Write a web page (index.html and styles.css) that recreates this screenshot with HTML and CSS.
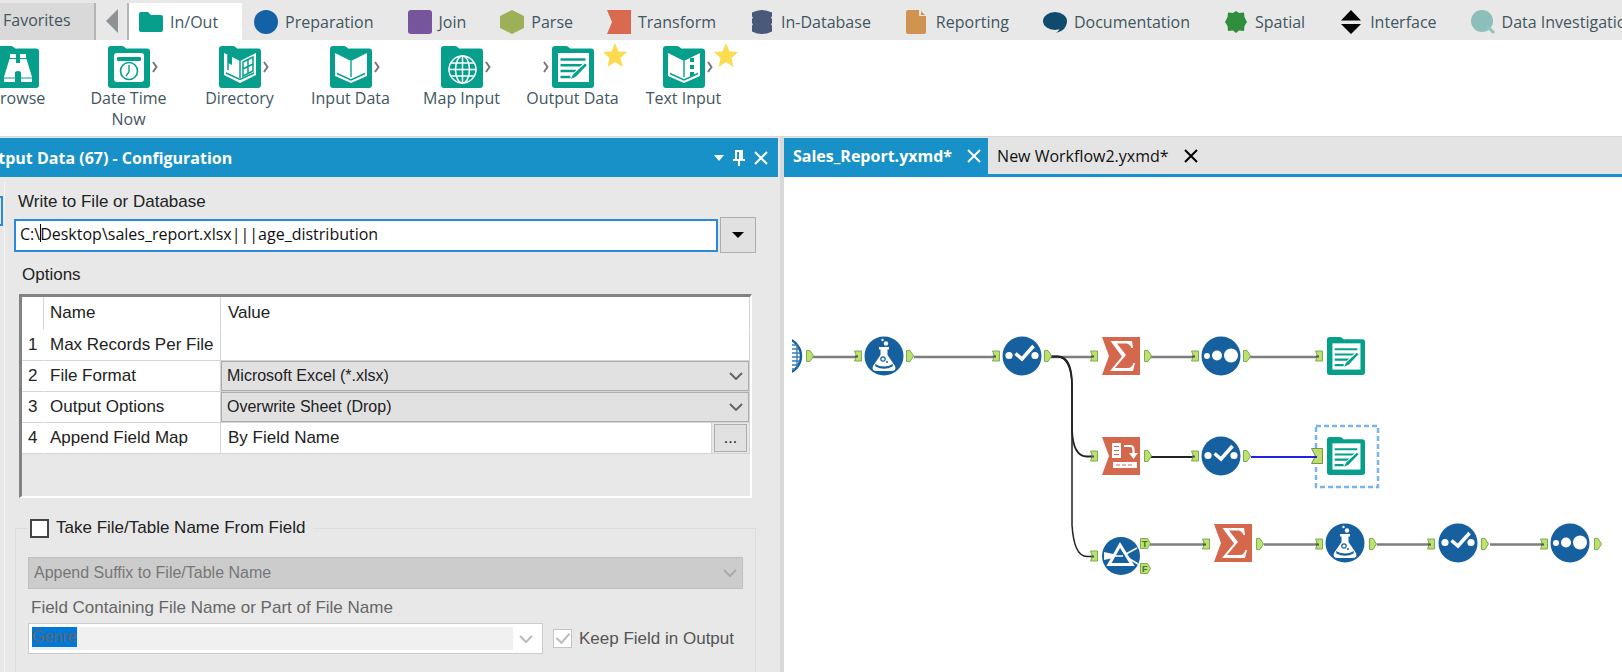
FILE: index.html
```html
<!DOCTYPE html>
<html lang="en">
<head>
<meta charset="utf-8">
<title>Sales_Report.yxmd</title>
<link rel="stylesheet" href="styles.css">
</head>
<body>
<svg class="symbols" aria-hidden="true">
  <symbol id="folder" viewBox="0 0 42 42">
    <path fill="#059f8c" d="M0 3a3 3 0 0 1 3-3h11q2 0 3 1.500t3 1h19a3 3 0 0 1 3 3v33.500a3 3 0 0 1-3 3H3a3 3 0 0 1-3-3z"/>
  </symbol>
  <symbol id="output" viewBox="0 0 42 42">
    <use href="#folder"/>
    <path fill="#fff" d="M6 7h31v29H6z"/>
    <path fill="none" stroke="#059f8c" stroke-width="2.400" d="M8.500 13.500h25M8.500 19.300h22M8.500 25h16M8.500 31h10"/>
    <path fill="none" stroke="#fff" stroke-width="5" d="M34 18 20 32"/>
    <path fill="#059f8c" d="m33 17.500 1.800 1.700-11 11.500-4.800 2.300 2-4.500z"/>
  </symbol>
  <symbol id="flask" viewBox="0 0 40 40">
    <circle cx="20" cy="20" r="19.500" fill="#17609f"/>
    <path fill="#fff" d="M15 11h10v2.500h-1.500V19L31 30q2 5-4 5H13q-6 0-4-5l7.500-11v-5.500H15z"/>
    <path fill="#17609f" d="M11 28q9 5 18 0l-.5 2.500q-8.500 4.500-17 0z"/>
    <circle cx="19" cy="23" r="2.200" fill="none" stroke="#17609f" stroke-width="1.200"/>
    <circle cx="23" cy="26" r="1" fill="#17609f"/>
    <circle cx="22" cy="7.500" r="2.200" fill="#fff"/><circle cx="18.500" cy="4" r="1.200" fill="#fff"/>
  </symbol>
  <symbol id="select" viewBox="0 0 40 40">
    <circle cx="20" cy="20" r="19.500" fill="#17609f"/>
    <circle cx="7" cy="19.500" r="3.600" fill="#fff"/><circle cx="33" cy="19.500" r="3.600" fill="#fff"/>
    <path fill="none" stroke="#fff" stroke-width="3.600" d="m13.500 17.500 6.500 5.500 11.500-13"/>
  </symbol>
  <symbol id="sort" viewBox="0 0 40 40">
    <circle cx="20" cy="20" r="19.500" fill="#17609f"/>
    <circle cx="6" cy="20" r="3" fill="#fff"/><circle cx="16" cy="19.500" r="5" fill="#fff"/><circle cx="30" cy="19.500" r="7" fill="#fff"/>
  </symbol>
  <symbol id="banner" viewBox="0 0 38 38"><path fill="#d5674d" d="M0 0h38v38H0l7-19z"/></symbol>
  <symbol id="sum" viewBox="0 0 38 38">
    <use href="#banner"/>
    <path fill="#fff" d="M8.500 4H30l1 7h-1.500q-1.500-4-5-4.500H15l9 11.500-11 13h13q4 0 5.500-5H33l-2 8H8l12-14.500z"/>
  </symbol>
  <symbol id="in" viewBox="0 0 8 12"><path fill="#bfe06c" stroke="#76ad55" d="M.5 1h7v10h-7l2-5z"/><path stroke="#555" stroke-width="2" d="M1 6.500h3"/></symbol>
  <symbol id="out" viewBox="0 0 8 12"><path fill="#bfe06c" stroke="#76ad55" d="M.5.5h3.500L7.500 6 4 11.500H.5z"/></symbol>
</svg>

<header class="ribbon">
  <nav class="tabs" aria-label="Tool categories">
    <button class="favorites">Favorites</button>
    <button class="scroll" aria-label="Scroll left"><svg width="12" height="24"><path fill="#8c9296" d="M12 0v24L0 12z"/></svg></button>
    <button class="tab current"><svg width="24" height="24" viewBox="0 0 24 24"><path fill="#059f8c" d="M0 4q0-2 2-2h7l3 3h10q2 0 2 2v13q0 2-2 2H2q-2 0-2-2z"/></svg>In/Out</button>
    <button class="tab"><svg width="24" height="24"><circle cx="12" cy="12" r="12" fill="#1362a6"/></svg>Preparation</button>
    <button class="tab"><svg width="24" height="24"><rect width="24" height="24" rx="3" fill="#77559c"/></svg>Join</button>
    <button class="tab"><svg width="24" height="24"><path fill="#9cb157" d="m12 0 12 6v12l-12 6-12-6V6z"/></svg>Parse</button>
    <button class="tab"><svg width="24" height="24"><path fill="#d9694f" d="M0 0h24v24H0l5-12z"/></svg>Transform</button>
    <button class="tab"><svg width="24" height="24"><path fill="#4a597a" d="M2 2.500Q12-2.500 22 2.500v4l-1 1 1 1.500v4l-1 1.500 1 1v6q-10 5-20 0v-6l1-1-1-1.500V9l1-1.500-1-1z"/></svg>In-Database</button>
    <button class="tab"><svg width="24" height="24"><path fill="#d19350" d="M1 2q0-2 2-2h11v6h7v16q0 2-2 2H3q-2 0-2-2z"/><path fill="#d19350" d="m16 1 4 4h-4z"/></svg>Reporting</button>
    <button class="tab"><svg width="24" height="24"><ellipse cx="12" cy="11" rx="12" ry="9" fill="#104a6c"/><path fill="#104a6c" d="M23.500 11q1 9-10.500 12 4-3 4-6z"/></svg>Documentation</button>
    <button class="tab"><svg width="24" height="24"><path fill="#2f8f3c" d="m12 1 3 2 5-.5.5 4.500 2.500 5-2.500 4-.5 5-5-.5-3 2.500-3-2.500-5 .5-.5-5L1 12l2.500-5L4 2.500 9 3z"/></svg>Spatial</button>
    <button class="tab"><svg width="24" height="24"><path d="m12 0 10 10.500H2zM2 14h20L12 24z"/></svg>Interface</button>
    <button class="tab"><svg width="24" height="24"><circle cx="11" cy="11" r="11" fill="#8cbfbc"/><path stroke="#8cc5c1" stroke-width="3" d="m16 16 7 7"/></svg>Data Investigation</button>
  </nav>
  <ul class="tools">
    <li><span class="glyph"><svg width="42" height="42"><use href="#folder"/><path fill="#fff" d="M13 8h6v4h-6zm10 0h6v4h-6zM12.500 13H19v4h4v-4h6.500l5.500 18v5H24V26q-3-2-6 0v10H7v-5z"/><path stroke="#059f8c" d="M7 32h11m6 0h11"/></svg></span>Browse</li>
    <li><span class="glyph"><svg width="42" height="42"><use href="#folder"/><rect x="6" y="7" width="30" height="29" rx="3" fill="#fff"/><rect x="9" y="11" width="24" height="4" rx="1" fill="#059f8c"/><circle cx="21" cy="25" r="8.500" fill="none" stroke="#059f8c" stroke-width="1.600"/><path fill="none" stroke="#059f8c" stroke-width="1.400" d="M21 19v7l-3 4"/></svg><svg class="port" width="6" height="12"><path d="m1 1 3.500 5L1 11"/></svg></span>Date Time Now</li>
    <li><span class="glyph"><svg width="42" height="42"><use href="#folder"/><path fill="#fff" d="M5 7v22l16 8 16-8V7l-16 8z"/><path fill="none" stroke="#059f8c" stroke-width="1.500" d="M21 14v18M7 27l14 6.500L35 27M9 9v15M24 16l10-5v14l-10 5zM29 14v14M24 23l10-5"/><path fill="#059f8c" d="m9 6 4 3v10l-4-2z"/></svg><svg class="port" width="6" height="12"><path d="m1 1 3.500 5L1 11"/></svg></span>Directory</li>
    <li><span class="glyph"><svg width="42" height="42"><use href="#folder"/><path fill="#fff" d="M5 7v23l16 7 16-7V7l-16 8z"/><path fill="none" stroke="#059f8c" stroke-width="1.400" d="M21 15v16M7 27.500 21 34l14-6.500"/></svg><svg class="port" width="6" height="12"><path d="m1 1 3.500 5L1 11"/></svg></span>Input Data</li>
    <li><span class="glyph"><svg width="42" height="42"><use href="#folder"/><g fill="none" stroke="#fff" stroke-width="1.500"><circle cx="21.500" cy="23.500" r="13.500"/><ellipse cx="21.500" cy="23.500" rx="7" ry="13.500"/><path d="M21.500 10v27M8 23.500h27M10 17h23M10 30h23"/></g></svg><svg class="port" width="6" height="12"><path d="m1 1 3.500 5L1 11"/></svg></span>Map Input</li>
    <li><span class="glyph"><svg class="port before" width="6" height="12"><path d="m1 1 3.500 5L1 11"/></svg><svg width="42" height="42"><use href="#output"/></svg><svg class="star" width="24" height="24"><path d="m12 0 3.500 8.500 8.500.5-6.500 6 2 9-7.500-5-7.500 5 2-9L0 9l8.500-.5z"/></svg></span>Output Data</li>
    <li><span class="glyph"><svg width="42" height="42"><use href="#folder"/><path fill="#fff" d="M5 7v23l16 7 16-7V7l-16 8z"/><path fill="none" stroke="#059f8c" stroke-width="1.400" d="M21 15v16M7 27.500 21 34l14-6.500"/><path fill="#059f8c" d="M27 12h4v4h-4zm0 7h4v4h-4zm0 7h4v4h-4z"/></svg><svg class="port" width="6" height="12"><path d="m1 1 3.500 5L1 11"/></svg><svg class="star" width="24" height="24"><path d="m12 0 3.500 8.500 8.500.5-6.500 6 2 9-7.500-5-7.500 5 2-9L0 9l8.500-.5z"/></svg></span>Text Input</li>
  </ul>
</header>

<main class="work">
  <section class="config">
    <div class="titlebar">
      <h2>Output Data (67) - Configuration</h2>
      <button aria-label="Window menu"><svg width="10" height="16"><path fill="#fff" d="M0 5h10l-5 6z"/></svg></button>
      <button aria-label="Pin"><svg width="12" height="16"><path fill="none" stroke="#fff" stroke-width="2" d="M3 10V1h6v9M0 10h12M6 10v6"/><path fill="#fff" d="M6 1h3v9H6z"/></svg></button>
      <button aria-label="Close"><svg width="14" height="14"><path stroke="#fff" stroke-width="2" d="m1 1 12 12M13 1 1 13"/></svg></button>
    </div>
    <div class="config-body">
      <div class="side"><span></span></div>
      <form class="form">
        <label class="path-label" for="path">Write to File or Database</label>
        <div class="path-row">
          <div class="path-box"><input id="path" type="text" value="C:\Desktop\sales_report.xlsx|||age_distribution"><span class="caret"></span></div>
          <button type="button" aria-label="Choose destination"><svg width="12" height="6"><path d="M0 0h12L6 6z"/></svg></button>
        </div>
        <h3>Options</h3>
        <div class="grid-frame">
          <table>
            <thead><tr><th class="num"></th><th class="name">Name</th><th>Value</th></tr></thead>
            <tbody>
              <tr><td class="num">1</td><td class="name">Max Records Per File</td><td></td></tr>
              <tr><td class="num">2</td><td class="name"><label for="format">File Format</label></td><td class="fill"><div class="pick"><select id="format"><option>Microsoft Excel (*.xlsx)</option></select><svg width="14" height="8"><path d="m1 1 6 6 6-6"/></svg></div></td></tr>
              <tr><td class="num">3</td><td class="name"><label for="mode">Output Options</label></td><td class="fill"><div class="pick"><select id="mode"><option>Overwrite Sheet (Drop)</option></select><svg width="14" height="8"><path d="m1 1 6 6 6-6"/></svg></div></td></tr>
              <tr><td class="num">4</td><td class="name">Append Field Map</td><td class="fill"><div class="map"><span>By Field Name</span><div class="more"><button type="button">...</button></div></div></td></tr>
            </tbody>
          </table>
        </div>
        <fieldset>
          <legend><input id="take" type="checkbox"><label for="take">Take File/Table Name From Field</label></legend>
          <div class="pick off"><select disabled aria-label="Name mode"><option>Append Suffix to File/Table Name</option></select><svg width="14" height="8"><path d="m1 1 6 6 6-6"/></svg></div>
          <label class="field-label" for="field">Field Containing File Name or Part of File Name</label>
          <div class="field-row">
            <div class="combo"><div class="well"><input id="field" type="text" value="Genre" disabled></div><button type="button" disabled aria-label="Show fields"><svg width="14" height="8"><path d="m1 1 6 6 6-6"/></svg></button></div>
            <input id="keep" type="checkbox" checked disabled><label for="keep">Keep Field in Output</label>
          </div>
        </fieldset>
      </form>
    </div>
  </section>

  <section class="workspace">
    <div class="files">
      <div class="file open"><span>Sales_Report.yxmd*</span><button aria-label="Close Sales_Report"><svg width="14" height="14"><path stroke="#fff" stroke-width="2" d="m1 1 12 12M13 1 1 13"/></svg></button></div>
      <div class="file"><span>New Workflow2.yxmd*</span><button aria-label="Close New Workflow2"><svg width="14" height="14"><path stroke="#000" stroke-width="2" d="m1 1 12 12M13 1 1 13"/></svg></button></div>
    </div>
    <svg class="canvas" role="img" aria-label="Workflow">
      <defs><clipPath id="edge"><path d="M8 150h40v60H8z"/></clipPath></defs>
      <g fill="none" stroke="#7d7d7d" stroke-width="2.500">
        <path d="M29 180h45M130 180h84M267 180h44M366 180h45M466 180h70M366 367.500h57M480 367.500h56M593 367.500h56M706 367.500h56"/>
        <g stroke="#222"><path stroke-width="1.800" d="M267 179.500h7Q288 180 288 208v45Q289 279.500 303 279.500h8"/><path stroke-width="1.500" d="M267 179.500h6Q287 180 288 208v140Q290 379.500 303 379.500h8"/><path stroke-width="2" d="M366 280h45"/></g>
      </g>
      <g clip-path="url(#edge)"><circle cx="-1" cy="179" r="18" fill="#fff" stroke="#17609f" stroke-width="2.500"/><path stroke="#3a7db5" stroke-width="1.400" d="M4 168h9M4 172h11M4 176h12M4 180h12M4 184h12M4 188h10M4 192h7M13 167v25"/></g>
      <use href="#flask" x="80" y="159" width="40" height="40"/>
      <use href="#select" x="218" y="159" width="40" height="40"/>
      <use href="#sum" x="318" y="160" width="38" height="38"/>
      <use href="#sort" x="417" y="159" width="40" height="40"/>
      <use href="#output" x="543" y="160" width="38" height="38"/>
      <use href="#banner" x="318" y="260" width="38" height="38"/>
      <path fill="#fff" d="M328 266h9v15h-9zM329 285h24v6h-24z"/>
      <path fill="none" stroke="#d5674d" d="M330 269.500h5M330 273.500h5M330 277.500h5M332 288h4m2 0h4m2 0h4"/>
      <path fill="none" stroke="#fff" stroke-width="2.200" d="M340 269h6q3.500 0 3.500 4v4"/><path fill="#fff" d="M345 276h9l-4.500 6z"/>
      <use href="#select" x="417" y="259" width="40" height="40"/>
      <use href="#output" x="543" y="260" width="38" height="38"/>
      <circle cx="337" cy="379" r="19" fill="#17609f"/>
      <path fill="none" stroke="#fff" stroke-width="3" d="m336 368-11 19.500h23z"/>
      <path fill="#fff" d="M320 375v8l9-2v-4z"/><path stroke="#fff" stroke-width="1.500" d="M330 379h9M342 377l11-6M344 381l10 6"/>
      <use href="#sum" x="430" y="347" width="38" height="38"/>
      <use href="#flask" x="541" y="346" width="40" height="40"/>
      <use href="#select" x="654" y="346" width="40" height="40"/>
      <use href="#sort" x="766" y="346" width="40" height="40"/>
      <g>
        <use href="#in" x="70" y="173" width="8" height="12"/><use href="#in" x="208" y="173" width="8" height="12"/><use href="#in" x="306" y="173" width="8" height="12"/><use href="#in" x="407" y="173" width="8" height="12"/><use href="#in" x="531" y="173" width="8" height="12"/>
        <use href="#in" x="306" y="273" width="8" height="12"/><use href="#in" x="407" y="273" width="8" height="12"/>
        <use href="#in" x="306" y="373" width="8" height="12"/><use href="#in" x="418" y="361" width="8" height="12"/><use href="#in" x="531" y="361" width="8" height="12"/><use href="#in" x="643" y="361" width="8" height="12"/><use href="#in" x="756" y="361" width="8" height="12"/>
        <use href="#out" x="22" y="173" width="8" height="12"/><use href="#out" x="122" y="173" width="8" height="12"/><use href="#out" x="260" y="173" width="8" height="12"/><use href="#out" x="360" y="173" width="8" height="12"/><use href="#out" x="459" y="173" width="8" height="12"/>
        <use href="#out" x="360" y="273" width="8" height="12"/><use href="#out" x="459" y="273" width="8" height="12"/>
        <use href="#out" x="472" y="361" width="8" height="12"/><use href="#out" x="585" y="361" width="8" height="12"/><use href="#out" x="697" y="361" width="8" height="12"/><use href="#out" x="810" y="361" width="8" height="12"/>
        <path fill="#bfe06c" stroke="#76ad55" d="M356.500 361.500h7l3 5-3 5h-7zM356.500 386.500h7l3 5-3 5h-7z"/>
        <text x="358" y="370">T</text><text x="358" y="395">F</text>
      </g>
      <rect x="532" y="249" width="62" height="61" fill="none" stroke="#76b5ea" stroke-width="2.500" stroke-dasharray="5 3"/>
      <path fill="#bfdc6c" stroke="#6f9a4c" d="M527.500 271.500h11v15h-11l4-7.500z"/>
      <path stroke="#2222e0" stroke-width="2" d="M467 280h66"/>
    </svg>
  </section>
</main>
</body>
</html>
```
FILE: styles.css
```css
* { box-sizing: border-box; }
body {
  margin: 0;
  height: 100vh;
  display: flex;
  flex-direction: column;
  overflow: hidden;
  background: #e8e8e8;
  color: #222;
  font: 17px/20px "Liberation Sans", Arial, sans-serif;
}
button, input, select { font: inherit; color: inherit; margin: 0; }
button { padding: 0; border: 0; background: none; }
svg { flex: none; display: block; }
.symbols { position: absolute; width: 0; height: 0; }

.ribbon { font-family: "Open Sans", "Noto Sans", sans-serif; font-size: 16px; color: #42565f; border-bottom: 1px solid #d9d9d9; background: #fff; }
.tabs { display: flex; height: 40px; padding-top: 3px; background: #e8e8e8; overflow: hidden; }
.favorites { flex: none; width: 94px; padding: 0 0 4px 3px; text-align: left; background: #d9d9d9; }
.scroll { flex: none; display: flex; align-items: center; justify-content: center; width: 35px; padding-bottom: 2px; border-left: 2px solid #b5b5b5; border-right: 2px solid #b5b5b5; }
.tab { flex: none; display: flex; align-items: center; gap: 7px; padding: 0 24px 0 10px; white-space: nowrap; }
.tab.current { background: #fff; margin-right: 2px; }
.tools { display: flex; height: 96px; margin: 0 0 0 -38px; padding: 6px 0 0; list-style: none; }
.tools li { flex: none; width: 111px; padding: 0 8px; text-align: center; line-height: 21px; }
.glyph { position: relative; display: block; width: 42px; height: 42px; margin: 0 auto; }
.port { position: absolute; left: 44px; top: 15px; fill: none; stroke: #777; stroke-width: 2; }
.port.before { left: -9px; }
.star { position: absolute; left: 51px; top: -3px; fill: #fddb4e; }

.work { flex: 1; display: flex; min-height: 0; }
.config { flex: none; width: 48%; width: round(down, 48%, 1px); display: flex; flex-direction: column; border-top: 1px solid #e4e4e4; }
.titlebar { flex: none; display: flex; align-items: center; gap: 9px; height: 39px; padding-right: 10px; background: #1891c8; color: #fff; font-family: "Open Sans", "Noto Sans", sans-serif; }
.titlebar h2 { flex: 1; margin: 0 0 0 -25px; font-size: 16px; font-weight: 700; white-space: nowrap; }
.config-body { flex: 1; display: flex; min-height: 0; }
.side { width: 5px; margin-top: 4px; padding-top: 15px; border-right: 1px solid #f4f4f4; }
.side span { display: block; width: 3px; height: 30px; border: 2px solid #2a8ad8; border-left: 0; }
.form { flex: 1; min-width: 0; padding: 14px 22px 0 9px; }
.path-label { display: block; padding-left: 4px; line-height: 22px; }
.path-row { display: flex; align-items: center; gap: 2px; margin-top: 4px; }
.path-box { position: relative; flex: 1; }
.path-box input { width: 100%; height: 33px; padding: 0 4px 3px; border: 2px solid #2a8ad8; background: #fff; color: #111; font-family: "Open Sans", "Noto Sans", sans-serif; font-size: 16px; outline: 0; }
.caret { position: absolute; left: 26px; top: 5px; width: 1px; height: 18px; background: #000; }
.path-row button { display: flex; align-items: center; justify-content: center; width: 36px; height: 36px; border: 1px solid #adadad; background: #e1e1e1; }
.form h3 { margin: 12px 0 9px 8px; font-size: 17px; font-weight: 400; }
.grid-frame { height: 204px; margin: 0 4px 0 5px; border: 3px solid #828282; border-right: 2px solid #fff; border-bottom: 2px solid #fff; }
table { width: 100%; border-collapse: separate; border-spacing: 0; table-layout: fixed; }
th, td { height: 31px; padding: 0 7px; border-right: 1px solid #d4d4d4; border-bottom: 1px solid #d4d4d4; background: #fff; font-weight: 400; text-align: left; white-space: nowrap; }
th { height: 33px; border-bottom-color: #fff; }
.num { width: 22px; padding: 0 0 0 6px; }
td.num { border-right-color: #fff; }
.name { width: 177px; padding: 0 6px; }
td.fill { padding: 0; }
.pick { display: grid; align-items: center; }
.pick select { grid-area: 1 / 1; width: 100%; height: 30px; padding: 0 5px; border: 1px solid #adadad; border-radius: 0; background: #e1e1e1; font-size: 16px; appearance: none; }
.pick svg { grid-area: 1 / 1; justify-self: end; margin-right: 6px; pointer-events: none; fill: none; stroke: #666; stroke-width: 2; }
.map { display: flex; align-items: center; justify-content: space-between; height: 30px; padding-left: 7px; }
.more { padding: 1px 2px; border-left: 1px solid #d4d4d4; background: #e8e8e8; }
.more button { width: 33px; height: 28px; border: 1px solid #adadad; background: #e1e1e1; font-size: 16px; }
fieldset { height: 180px; margin: 20px 0 0 1px; padding: 19px 12px 0; border: 1px solid #dcdcdc; color: #666; }
legend { display: flex; align-items: center; gap: 7px; padding: 0 8px 0 2px; color: #222; }
input[type="checkbox"] { appearance: none; width: 19px; height: 19px; border: 2px solid #444; background: #fff; }
input[type="checkbox"]:disabled { border: 1px solid #c4c4c4; background: #fff; }
input[type="checkbox"]:checked::after { content: ""; display: block; width: 6px; height: 11px; margin: 0 0 0 5px; border: solid #bbb; border-width: 0 2px 2px 0; transform: rotate(42deg); }
.off select { height: 32px; border-color: #bfbfbf; background: #ccc; color: #777; opacity: 1; }
.off svg { stroke: #aaa; }
.field-label { display: block; margin: 9px 0 5px 3px; }
.field-row { display: flex; align-items: center; }
.combo { flex: 1; display: flex; height: 31px; margin-right: 10px; padding: 3px; border: 1px solid #ccc; background: #fff; }
.well { flex: 1; background: #f0f0f0; }
.well input { display: block; width: 45px; height: 20px; padding: 0; border: 0; background: #0078d7; color: #666; font-size: 16px; }
.combo button { display: flex; align-items: center; justify-content: center; width: 26px; }
.combo svg { fill: none; stroke: #bbb; stroke-width: 2; }
.field-row label { margin: 0 9px 0 7px; color: #555; }

.workspace { flex: 1; display: flex; flex-direction: column; min-width: 0; margin-left: 2px; border-left: 4px solid #d9d9d9; background: #fff; }
.files { flex: none; display: flex; height: 40px; border-top: 1px solid #e4e4e4; border-bottom: 3px solid #1891c8; background: #e4e4e4; color: #111; font-family: "Open Sans", "Noto Sans", sans-serif; font-size: 16px; }
.file { display: flex; align-items: center; gap: 15px; padding: 0 7px 0 9px; }
.file.open { background: #1891c8; color: #fff; font-weight: 700; }
.canvas { flex: 1; width: 100%; min-height: 0; overflow: hidden; }
.canvas text { font: 700 9px "Liberation Sans", sans-serif; fill: #4a6b35; }
```
